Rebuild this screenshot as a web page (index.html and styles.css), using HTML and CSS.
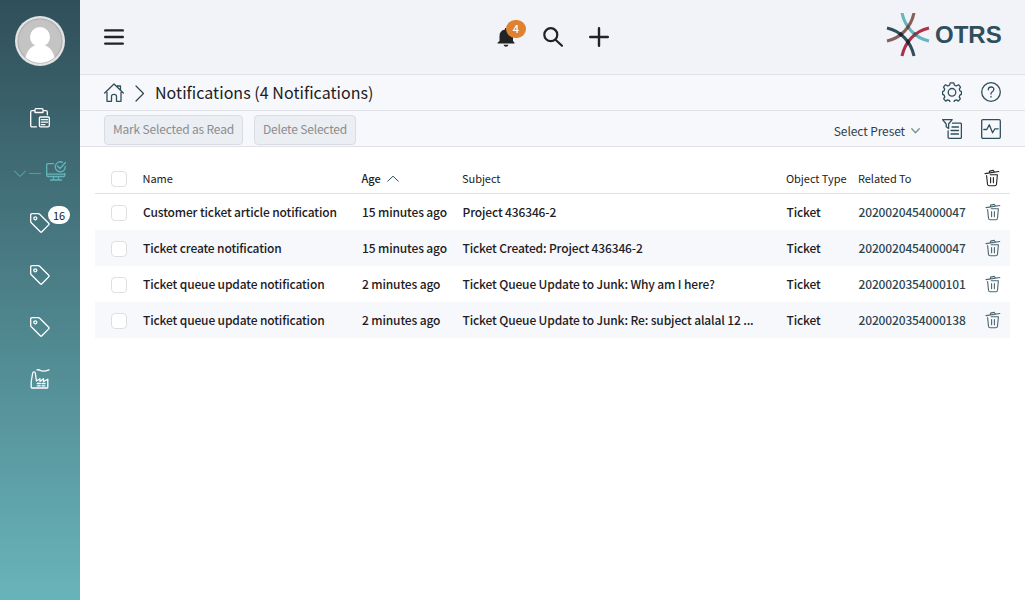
FILE: index.html
```html
<!DOCTYPE html>
<html lang="en">
<head>
<meta charset="utf-8">
<title>Notifications</title>
<link rel="stylesheet" href="styles.css">
</head>
<body>
<svg class="defs" aria-hidden="true">
  <symbol id="tag" viewBox="0 0 20 20"><path d="M2 .7h6.3q.8 0 1.4.6l9 9q.8.8 0 1.6l-6.8 6.9q-.8.8-1.6 0l-9-9Q.7 9.200.7 8.500V2Q.7.7 2 .7Z"/><circle cx="5.300" cy="5.300" r="1.500"/></symbol>
  <symbol id="trash" viewBox="0 0 16 18"><path d="M1 4.600 14.800 2.500M5.300 3.700l.3-1.600 3.500-.7 1 1.300M2.600 6.500l.9 8.700q.2 1.600 1.800 1.600h5.400q1.600 0 1.800-1.600l.9-9.500H6.200M6.600 8.500v5.200M9.400 8.500v5.200"/></symbol>
</svg>
<div class="app">
  <aside class="sidebar">
    <svg class="avatar" viewBox="0 0 50 50"><defs><clipPath id="face"><circle cx="25" cy="25" r="22"/></clipPath></defs><circle cx="25" cy="25" r="25" fill="#e3e3e3"/><circle cx="25" cy="25" r="22" fill="#c4c4c4" stroke="#b3b3b3"/><g clip-path="url(#face)" fill="#fff"><circle cx="25" cy="21" r="10"/><path d="M9.500 47c1-10 5-15.500 10-17.500h11c5 2 9 7.500 10 17.500Z"/></g></svg>
    <a class="nav clip"><svg class="ico" viewBox="0 0 20 20"><path d="M6.500 18.800H2q-1.300 0-1.300-1.300V4q0-1.300 1.300-1.300h3M13 2.700h3q1.300 0 1.300 1.300v2.800M5 4.500V1.700q0-1 1-1h6q1 0 1 1v2.800ZM10.500 9h7.700q1.100 0 1.100 1.100v7.400q0 1.300-1.300 1.300h-7.300q-1.300 0-1.300-1.300v-7.400q0-1.100 1.100-1.100Z"/><path d="M11.300 11.700h6.200M11.300 14.200h6.200M11.300 16.700h3.500"/></svg></a>
    <a class="nav active"><svg class="chev" viewBox="0 0 12 8"><path d="m.5 1 5.500 5.500L11.500 1"/></svg><span class="dash"></span><svg class="ico" viewBox="0 0 20 20"><path d="M7.500 2.700H2Q.7 2.700.7 4v10.200q0 1.300 1.300 1.300h15.500q1.300 0 1.300-1.300V12.500M.7 13.200h18M7.500 15.500v3M12.500 15.500v3M4.500 19h11M16.500 1.300A5 5 0 1 0 19.300 5.500M11.500 5l2.500 2.500 5.500-6"/></svg></a>
    <a class="nav first-tag"><svg class="ico"><use href="#tag"/></svg><span class="count">16</span></a>
    <a class="nav tag"><svg class="ico"><use href="#tag"/></svg></a>
    <a class="nav tag"><svg class="ico"><use href="#tag"/></svg></a>
    <a class="nav factory"><svg class="ico" viewBox="0 0 20 20"><path d="M1.200 18V13L2.600 4.500Q2.800 2.900 4 2.900t1.400 1.600l1 7.500L10 9.800v2.700l3.500-2.700v2.700l4.300-2.200v8q0 .7-.7.700H2q-.8 0-.8-1M7 .8Q9 .5 10.500 1.600q3.500 1.200 8.500-.8"/><path d="M7.300 14.500h3M12 14.500h3M7.300 16.800h3M12 16.800h3"/></svg></a>
  </aside>
  <div class="main">
    <header class="top">
      <svg class="burger" viewBox="0 0 20 18"><path d="M1.200 2.400h17.600M1.200 9h17.600M1.200 15.600h17.600"/></svg>
      <div class="actions">
        <div class="bell"><svg viewBox="0 0 20 20"><path d="M2.500 14V9Q2.500 3.500 8 2.500V1h3v1.500Q16 4 16 9v5l1.500 1.700v.900H.5v-.9ZM6.500 17.700h5q-.5 2-2.500 2t-2.500-2Z"/></svg><span class="badge">4</span></div>
        <svg class="search" viewBox="0 0 20 20"><circle cx="7.800" cy="7.700" r="6.500"/><path d="m12.500 12.700 6.500 6"/></svg>
        <svg class="plus" viewBox="0 0 20 20"><path d="M10 1.200v17.600M1.200 10h17.600"/></svg>
      </div>
      <div class="brand">
        <svg viewBox="0 0 44 44"><g fill="none" stroke-width="3.100"><path stroke="#65b7bd" d="M16 0C19 14 29 25 43 28"/><path stroke="#86605b" d="M28 0C25 14 15 25 1 28"/><path stroke="#ab3249" d="M43 15C29 18 19 29 16 43"/><path stroke="#304f5b" d="M1 15C15 18 25 29 28 43"/></g><path fill="#5a4e55" d="m22 11.500 2 2.500-2 2.700-2-2.700ZM29 19l2.500 2.300L29 24l-2.500-2.700Z"/><path fill="#1c2326" d="m14.800 19 2.700 2.300-2.700 2.700-2.600-2.700ZM22 26l2.200 3-2.200 3.200-2.200-3.200Z"/></svg>
        <span>OTRS</span>
      </div>
    </header>
    <div class="crumbs">
      <svg class="home" viewBox="0 0 20 20"><path d="m.7 10 9.300-9 9.300 9M13 3h3.500v3.800M3 9.500v8.800h4.500v-5q0-2 2.500-2t2.500 2v5H17V9.500"/></svg>
      <svg class="sep" viewBox="0 0 10 17"><path d="m1 1 7.500 7.500L1 16"/></svg>
      <h1>Notifications (4 Notifications)</h1>
      <div class="tools">
        <svg viewBox="0 0 20 20"><path d="M8.200.8h3.600l.6 2.400 1.900.8 2.200-1.300 2 2.500-1.200 2 .6 1.600 1.500.8v2.800l-1.500.7-.7 1.800 1.100 2-2 2.200-2-1.200-1.900.8-.6 2.500H8.200l-.6-2.500-1.900-.8-2 1.200-2-2.200 1.100-2-.7-1.800-1.500-.7V9.600l1.500-.8.600-1.600-1.200-2 2-2.500L5.700 4l1.900-.8Z"/><circle cx="10" cy="10.300" r="3.800"/></svg>
        <svg viewBox="0 0 20 20"><circle cx="10" cy="10" r="9.300"/><path d="M7.300 7.800q0-2.800 2.800-2.800t2.700 2.500q0 1.300-1.500 2.200-1.300.8-1.300 2.300M10 14.500v.5"/></svg>
      </div>
    </div>
    <div class="toolbar">
      <button class="b1">Mark Selected as Read</button>
      <button class="b2">Delete Selected</button>
      <span class="preset">Select Preset</span><svg class="caret" viewBox="0 0 9 6"><path d="m.8.800 3.700 4 3.700-4"/></svg>
      <div class="tools">
        <svg viewBox="0 0 20 20"><path d="M.6.700h9.600L6.600 5v4.500L4.200 7.800V5ZM10.500 4.200h7.800q1.100 0 1.100 1.100v12.900q0 1.100-1.100 1.100H7.200q-1.100 0-1.100-1.100V12M10 8h6.500M9 11.500h7.500M9 15h7.500"/></svg>
        <svg viewBox="0 0 20 20"><rect x=".7" y=".7" width="18.600" height="18.600" rx="1.200"/><path d="M2.800 10.500h3l2.500-4.700 3.300 8 2.300-4h3.300"/></svg>
      </div>
    </div>
    <main class="list">
      <div class="row head"><i class="box"></i><span>Name</span><span class="age">Age<svg viewBox="0 0 12 7"><path d="m.7 6.200 5.300-5 5.300 5"/></svg></span><span>Subject</span><span>Object Type</span><span>Related To</span><svg class="trash"><use href="#trash"/></svg></div>
      <div class="row"><i class="box"></i><span>Customer ticket article notification</span><span>15 minutes ago</span><span>Project 436346-2</span><span>Ticket</span><a>2020020454000047</a><svg class="trash"><use href="#trash"/></svg></div>
      <div class="row"><i class="box"></i><span>Ticket create notification</span><span>15 minutes ago</span><span>Ticket Created: Project 436346-2</span><span>Ticket</span><a>2020020454000047</a><svg class="trash"><use href="#trash"/></svg></div>
      <div class="row"><i class="box"></i><span>Ticket queue update notification</span><span>2 minutes ago</span><span>Ticket Queue Update to Junk: Why am I here?</span><span>Ticket</span><a>2020020354000101</a><svg class="trash"><use href="#trash"/></svg></div>
      <div class="row"><i class="box"></i><span>Ticket queue update notification</span><span>2 minutes ago</span><span>Ticket Queue Update to Junk: Re: subject alalal 12 ...</span><span>Ticket</span><a>2020020354000138</a><svg class="trash"><use href="#trash"/></svg></div>
    </main>
  </div>
</div>
</body>
</html>
```
FILE: styles.css
```css
* { box-sizing: border-box; }
body { margin: 0; background: #fff; color: #1d2023; font: 12px/18px "Noto Sans CJK SC", "Noto Sans", sans-serif; }
svg { fill: none; stroke: #304f5b; stroke-width: 1.3; stroke-linejoin: round; stroke-linecap: round; flex: none; display: block; }
.defs { position: absolute; width: 0; height: 0; }
.app { display: flex; height: 600px; overflow: hidden; }
.sidebar { width: 80px; flex: none; padding-top: 16px; display: flex; flex-direction: column; align-items: center; background: linear-gradient(#304f5a, #69b4ba); }
.avatar { width: 50px; height: 50px; stroke: none; }
.nav { position: relative; width: 80px; display: flex; justify-content: center; }
.ico { width: 20px; height: 20px; stroke: #fff; }
.clip { margin-top: 42px; }
.active { margin-top: 33px; justify-content: flex-start; padding-left: 14px; align-items: center; }
.active svg { stroke: #62b5bb; }
.active .chev { width: 12px; height: 8px; margin-top: 5px; stroke-width: 1; }
.dash { width: 12px; height: 1px; background: #559aa1; margin: 5px 5px 0 3px; }
.first-tag { margin-top: 32px; }
.count { position: absolute; left: 48px; top: -7px; width: 22px; height: 18px; border-radius: 9px; background: #fff; text-align: center; font-size: 11px; line-height: 18px; color: #15181a; }
.tag { margin-top: 32px; }
.factory { margin-top: 32px; }
.main { flex: 1; min-width: 0; }
.top { height: 75px; background: #f2f3f8; border-bottom: 1px solid #dfe1e6; display: flex; align-items: flex-start; padding-left: 24px; }
.burger { width: 20px; height: 18px; margin-top: 28px; stroke: #202224; stroke-width: 2.4; }
.actions { display: flex; margin: 27px 0 0 373px; }
.bell { position: relative; width: 20px; height: 20px; }
.bell svg { width: 20px; height: 20px; fill: #202224; stroke: none; }
.badge { position: absolute; left: 9px; top: -7px; width: 20px; height: 18px; border-radius: 9px; background: #e0812f; color: #fff; font-size: 11px; line-height: 17px; font-weight: 500; text-align: center; }
.search { width: 20px; height: 20px; margin-left: 26px; stroke: #202224; stroke-width: 2.2; }
.plus { width: 20px; height: 20px; margin-left: 26px; stroke: #202224; stroke-width: 2.4; }
.brand { display: flex; margin: 13px 24px 0 auto; }
.brand svg { width: 44px; height: 44px; stroke-linecap: butt; stroke: none; }
.brand span { font: bold 24px/44px "Liberation Sans", sans-serif; color: #304f5b; margin-left: 5px; width: 66px; }
.crumbs { height: 36px; background: #f7f8fc; border-bottom: 1px solid #dfe1e6; display: flex; align-items: center; padding: 0 24px; }
.home { width: 20px; height: 20px; }
.sep { width: 10px; height: 17px; margin: 2px 0 0 11px; stroke-width: 1.2; stroke: #34434a; }
h1 { margin: 0 0 1px 10px; font-size: 16px; line-height: 24px; font-weight: 400; letter-spacing: .045px; }
.tools { display: flex; gap: 19px; }
.crumbs .tools { margin: 0 0 2px auto; }
.tools svg { width: 20px; height: 20px; }
.toolbar { height: 36px; background: #f7f8fc; border-bottom: 1px solid #dfe1e6; display: flex; align-items: center; padding: 0 24px; }
button { height: 30px; margin: 2px 0 0; border: 1px solid #d9dce2; border-radius: 4px; background: #ebeef2; color: #8b8d90; font: 12px/26px "Noto Sans CJK SC", sans-serif; letter-spacing: -.17px; padding: 0 0 2px; white-space: nowrap; }
.b1 { width: 139px; }
.b2 { width: 102px; margin-left: 11px; }
.preset { margin: 4px 0 0 auto; color: #304049; letter-spacing: -.1px; }
.caret { width: 9px; height: 6px; margin: 5px 22px 0 6px; stroke: #7e9298; stroke-width: 1.4; }
.list { padding: 17px 15px 0; }
.row { height: 36px; display: grid; grid-template-columns: 32px 219px 100.5px 324px 72px 125px 16px; align-items: center; padding-left: 16px; font-weight: 500; letter-spacing: -.14px; white-space: nowrap; }
.row.head { height: 30px; border-bottom: 1px solid #dfe1e3; font-size: 11px; font-weight: 400; letter-spacing: -.05px; }
.head span { margin: -2px 0 0 -.5px; }
.row:nth-child(odd):not(.head) { background: #f7f8fc; }
.row a { color: #2c4651; }
.box { width: 16px; height: 16px; border: 1px solid #dedfe1; border-radius: 4px; background: #fff; }
.row:not(.head) .box { margin-top: 2px; }
.head .age { display: flex; align-items: center; font-weight: 500; }
.age svg { width: 12px; height: 7px; margin: 1px 0 0 6px; stroke-width: 1; }
.trash { width: 16px; height: 18px; stroke-width: 1.1; margin: -1px 0 0 1px; stroke: #4b6670; }
.head .trash { stroke: #202224; margin: -2px 0 0; }
```
